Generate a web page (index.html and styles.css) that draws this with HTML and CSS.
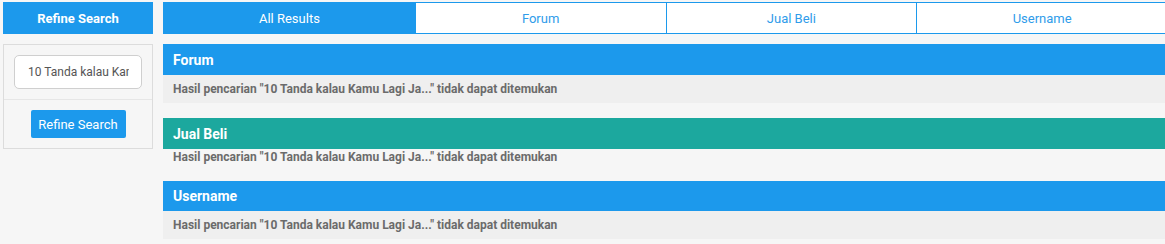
FILE: index.html
```html
<!DOCTYPE html>
<html>
<head>
<meta charset="utf-8">
<link rel="stylesheet" href="styles.css">
</head>
<body>
<div class="page">
  <aside class="sidebar">
    <div class="side-title">Refine Search</div>
    <div class="side-box">
      <div class="side-field">
        <input class="search-input" type="text" value="10 Tanda kalau Kamu Lagi Jatuh Cinta">
      </div>
      <div class="side-action">
        <button class="refine-btn">Refine Search</button>
      </div>
    </div>
  </aside>
  <main class="results">
    <nav class="tabs">
      <a class="tab active">All Results</a>
      <a class="tab">Forum</a>
      <a class="tab">Jual Beli</a>
      <a class="tab">Username</a>
    </nav>
    <section class="group">
      <h2 class="group-head blue">Forum</h2>
      <p class="group-body">Hasil pencarian "10 Tanda kalau Kamu Lagi Ja..." tidak dapat ditemukan</p>
    </section>
    <section class="group">
      <h2 class="group-head teal">Jual Beli</h2>
      <p class="group-body plain">Hasil pencarian "10 Tanda kalau Kamu Lagi Ja..." tidak dapat ditemukan</p>
    </section>
    <section class="group">
      <h2 class="group-head blue short">Username</h2>
      <p class="group-body">Hasil pencarian "10 Tanda kalau Kamu Lagi Ja..." tidak dapat ditemukan</p>
    </section>
  </main>
</div>
</body>
</html>
```

FILE: styles.css
```css
* { box-sizing: border-box; }
html, body {
  margin: 0;
  padding: 0;
  background: #f6f6f6;
  overflow: hidden;
}
body {
  font-family: Roboto, "Liberation Sans", Arial, sans-serif;
}
.page {
  display: flex;
  gap: 10px;
  padding: 2px 0 0 3px;
  width: 1200px;
}
.sidebar {
  width: 150px;
  flex: none;
  display: flex;
  flex-direction: column;
  gap: 10px;
}
.side-title {
  height: 32px;
  background: #1c99ec;
  color: #fff;
  font-weight: 700;
  font-size: 13px;
  display: flex;
  align-items: center;
  justify-content: center;
}
.side-box {
  border: 1px solid #dcdcdc;
  background: #f6f6f6;
}
.side-field {
  padding: 10px;
  border-bottom: 1px solid #e6e6e6;
}
.search-input {
  display: block;
  width: 128px;
  height: 34px;
  border: 1px solid #cfcfcf;
  border-radius: 5px;
  background: #fff;
  padding: 0 12px 0 13px;
  font-family: inherit;
  font-size: 12px;
  color: #555;
  outline: none;
}
.side-action {
  padding: 10px 0;
  display: flex;
  justify-content: center;
}
.refine-btn {
  width: 95px;
  height: 28px;
  border: 0;
  border-radius: 2px;
  background: #1c99ec;
  color: #fff;
  font-family: inherit;
  font-size: 13px;
  padding: 0;
}
.results {
  width: 1005px;
  flex: none;
  display: flex;
  flex-direction: column;
}
.tabs {
  display: grid;
  grid-template-columns: repeat(4, 1fr);
  height: 32px;
  border: 1px solid #1c99ec;
  background: #fff;
  margin-bottom: 10px;
}
.tab {
  display: flex;
  align-items: center;
  justify-content: center;
  font-size: 13px;
  color: #2f9cea;
  border-left: 1px solid #1c99ec;
}
.tab:first-child { border-left: 0; }
.tab.active {
  background: #1c99ec;
  color: #fff;
}
.group { margin: 0; }
.group-head {
  margin: 0;
  height: 31px;
  padding: 0 10px;
  display: flex;
  align-items: center;
  color: #fff;
  font-size: 14px;
  font-weight: 700;
}
.group-head.short { height: 30px; }
.blue { background: #1c99ec; }
.teal { background: #1ca89e; }
.group-body {
  margin: 0 0 15px;
  height: 28px;
  padding: 0 10px;
  display: flex;
  align-items: center;
  background: #efefef;
  color: #6b6b6b;
  font-size: 12px;
  font-weight: 700;
}
.group-body.plain {
  background: transparent;
  height: 17px;
  align-items: flex-start;
  padding-top: 1px;
}
```
